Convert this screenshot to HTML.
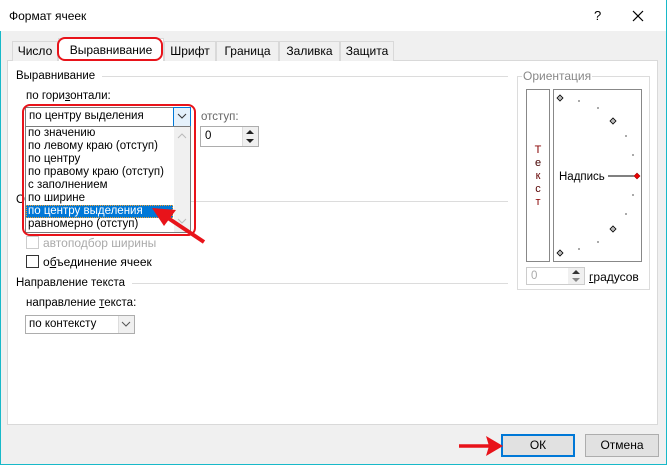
<!DOCTYPE html>
<html><head><meta charset="utf-8"><style>
*{margin:0;padding:0;box-sizing:border-box}
body{width:667px;height:465px;overflow:hidden;background:#fff;font-family:"Liberation Sans",sans-serif;font-size:11.5px;color:#000;position:relative}
.a{position:absolute;white-space:nowrap}
.win{position:absolute;left:0;top:0;width:667px;height:465px;border:1px solid #18b9c9;border-top:none;background:#f0f0f0}
.title{position:absolute;left:0;top:0;width:666px;height:31px;background:#fff}
.tab{position:absolute;top:41px;height:20px;border:1px solid #d9d9d9;border-bottom:none;background:#f0f0f0;text-align:center;line-height:18px;font-size:12px}
.panel{position:absolute;left:7px;top:60px;width:651px;height:365px;background:#fff;border:1px solid #d9d9d9}
.line{position:absolute;height:1px;background:#dcdcdc}
.box{position:absolute;border:1px solid #adadad;background:#fff}
.item{position:absolute;left:27px;height:13px;line-height:13px;font-size:11.5px}
</style></head><body>
<div class="win"></div>
<div class="title"></div>
<div class="a" style="left:9px;top:9px;font-size:12px">Формат ячеек</div>
<div class="a" style="left:594px;top:8px;font-size:13px">?</div>
<svg class="a" style="left:632px;top:10px" width="12" height="12"><path d="M1 1L11 11M11 1L1 11" stroke="#000" stroke-width="1.2"/></svg>

<div class="panel"></div>
<div class="tab" style="left:12px;width:46px">Число</div>
<div class="tab" style="left:58px;top:38px;height:23px;width:106px;background:#fff;line-height:22px">Выравнивание</div>
<div class="tab" style="left:164px;width:52px">Шрифт</div>
<div class="tab" style="left:216px;width:63px">Граница</div>
<div class="tab" style="left:279px;width:61px">Заливка</div>
<div class="tab" style="left:340px;width:54px">Защита</div>
<div class="a" style="left:57px;top:37px;width:106px;height:24px;border:2.5px solid #e8131a;border-radius:8px"></div>

<div class="a" style="left:16px;top:70px">Выравнивание</div>
<div class="line" style="left:102px;top:76px;width:406px"></div>
<div class="a" style="left:26px;top:90px">по гори<u>з</u>онтали:</div>

<div class="a" style="left:16px;top:194px">О</div>
<div class="line" style="left:190px;top:201px;width:318px"></div>

<div class="box" style="left:25px;top:107px;width:166px;height:20px;border-color:#7a7a7a"></div>
<div class="a" style="left:29px;top:110px">по центру выделения</div>
<div class="a" style="left:173px;top:107px;width:18px;height:20px;background:#e5f1fb;border:1px solid #0078d7"></div>
<svg class="a" style="left:177px;top:113px" width="10" height="7"><path d="M1 1L5 5L9 1" stroke="#333" fill="none"/></svg>
<div class="box" style="left:25px;top:126px;width:166px;height:107px;border-color:#7a7a7a"></div>
<div class="a" style="left:174px;top:127px;width:16px;height:105px;background:#f0f0f0"></div>
<svg class="a" style="left:177px;top:133px" width="10" height="7"><path d="M1 5L5 1L9 5" stroke="#bbb" fill="none"/></svg>
<svg class="a" style="left:177px;top:218px" width="10" height="7"><path d="M1 1L5 5L9 1" stroke="#bbb" fill="none"/></svg>
<div class="item" style="top:127px;left:28px">по значению</div>
<div class="item" style="top:140px;left:28px">по левому краю (отступ)</div>
<div class="item" style="top:153px;left:28px">по центру</div>
<div class="item" style="top:166px;left:28px">по правому краю (отступ)</div>
<div class="item" style="top:179px;left:28px">с заполнением</div>
<div class="item" style="top:192px;left:28px">по ширине</div>
<div class="a" style="left:26px;top:205px;width:147px;height:13px;background:#0078d7;border:1px dotted #f0a030"></div>
<div class="item" style="top:205px;left:28px;color:#fff">по центру выделения</div>
<div class="item" style="top:218px;left:28px">равномерно (отступ)</div>
<div class="a" style="left:22px;top:104px;width:174px;height:132px;border:2.5px solid #e8131a;border-radius:8px"></div>

<div class="a" style="left:201px;top:111px;color:#666">отступ:</div>
<div class="box" style="left:200px;top:126px;width:59px;height:21px"></div>
<div class="a" style="left:205px;top:130px">0</div>
<div class="a" style="left:242px;top:127px;width:16px;height:19px;background:#f0f0f0;border-left:1px solid #ddd"></div>
<svg class="a" style="left:246px;top:129px" width="8" height="16"><path d="M0 5L4 1L8 5Z M0 10L8 10L4 14Z" fill="#222"/></svg>

<div class="a" style="left:26px;top:236px;width:13px;height:13px;border:1px solid #ccc;background:#fff"></div>
<div class="a" style="left:43px;top:236px;color:#aaa;font-size:12px">автоподбор ширины</div>
<div class="a" style="left:26px;top:255px;width:13px;height:13px;border:1px solid #333;background:#fff"></div>
<div class="a" style="left:43px;top:255px;font-size:12px">о<u>б</u>ъединение ячеек</div>

<div class="a" style="left:16px;top:277px">Направление текста</div>
<div class="line" style="left:132px;top:283px;width:376px"></div>
<div class="a" style="left:26px;top:297px">направление <u>т</u>екста:</div>
<div class="box" style="left:25px;top:315px;width:110px;height:19px"></div>
<div class="a" style="left:29px;top:318px">по контексту</div>
<div class="a" style="left:118px;top:316px;width:16px;height:17px;background:#f0f0f0;border-left:1px solid #ddd"></div>
<svg class="a" style="left:121px;top:321px" width="10" height="7"><path d="M1 1L5 5L9 1" stroke="#555" fill="none"/></svg>

<div class="a" style="left:517px;top:76px;width:133px;height:214px;border:1px solid #dcdcdc"></div>
<div class="a" style="left:522px;top:69px;background:#fff;color:#888;padding:0 1px;font-size:12px">Ориентация</div>
<div class="a" style="left:526px;top:89px;width:24px;height:173px;border:1px solid #888"></div>
<div class="a" style="left:533px;top:144px;line-height:13px;font-size:11px;text-align:center;width:10px;white-space:normal">
<span style="color:#800">Т</span><br><span style="color:#400">е</span><br><span style="color:#600">к</span><br><span style="color:#500">с</span><br><span style="color:#800">т</span></div>
<div class="a" style="left:553px;top:89px;width:89px;height:173px;border:1px solid #888"></div>
<svg class="a" style="left:553px;top:89px" width="95" height="173">
<g fill="#aaa"><rect x="25" y="11" width="2" height="2"/><rect x="44" y="18" width="2" height="2"/><rect x="72" y="46" width="2" height="2"/><rect x="79" y="65" width="2" height="2"/><rect x="79" y="105" width="2" height="2"/><rect x="72" y="124" width="2" height="2"/><rect x="44" y="152" width="2" height="2"/><rect x="25" y="159" width="2" height="2"/></g>
<g fill="#bbb" stroke="#000" stroke-width="0.8"><path d="M4 9L7 6L10 9L7 12Z"/><path d="M57 32L60 29L63 32L60 35Z"/><path d="M57 140L60 137L63 140L60 143Z"/><path d="M4 164L7 161L10 164L7 167Z"/></g>
<path d="M55 87H83" stroke="#000"/><path d="M81 87L84 84L87 87L84 90Z" fill="#e00" stroke="#900" stroke-width="0.6"/>
</svg>
<div class="a" style="left:559px;top:171px">Надпись</div>
<div class="box" style="left:526px;top:267px;width:59px;height:18px;border-color:#ccc"></div>
<div class="a" style="left:531px;top:270px;color:#aaa">0</div>
<div class="a" style="left:568px;top:268px;width:16px;height:16px;background:#f0f0f0"></div>
<svg class="a" style="left:572px;top:269px" width="8" height="14"><path d="M0 5L4 1L8 5Z" fill="#333"/><path d="M0 9L8 9L4 13Z" fill="#888"/></svg>
<div class="a" style="left:589px;top:270px;font-size:12px"><u>г</u>радусов</div>

<div class="a" style="left:501px;top:434px;width:74px;height:23px;border:2px solid #0078d7;background:#e1e1e1;text-align:center;line-height:19px;font-size:12px">ОК</div>
<div class="a" style="left:585px;top:434px;width:74px;height:23px;border:1px solid #adadad;background:#e1e1e1;text-align:center;line-height:21px;font-size:12px">Отмена</div>

<svg class="a" style="left:0;top:0" width="667" height="465">
<path d="M204 242L165 216" stroke="#e8131a" stroke-width="4"/>
<path d="M152 208L176 210L164 226Z" fill="#e8131a"/>
<path d="M459 446H490" stroke="#e8131a" stroke-width="3.5"/>
<path d="M503 446L486 436L489 446L486 456Z" fill="#e8131a"/>
</svg>
</body></html>
